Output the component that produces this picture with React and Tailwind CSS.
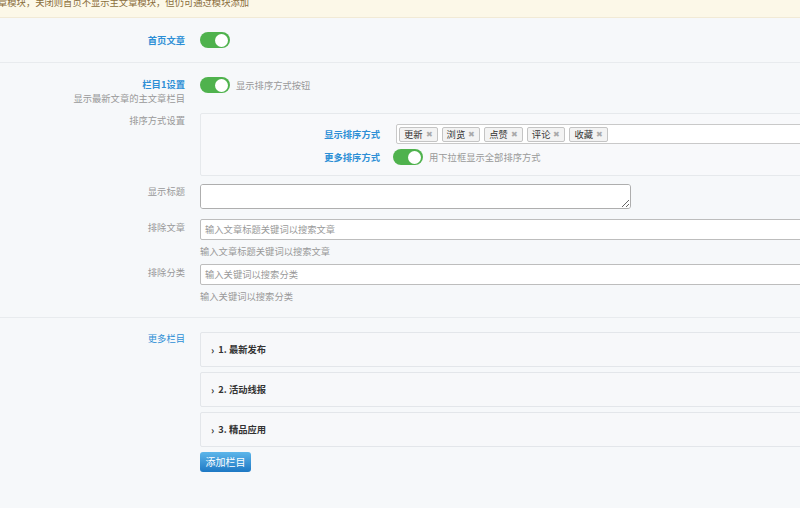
import React from "react";

const font = { fontFamily: '"Noto Sans CJK SC", "Noto Sans", sans-serif' };

function Toggle() {
  return (
    <div className="w-[30px] h-[16px] rounded-full bg-[#4fb24d] flex items-center justify-end pr-[2px] shrink-0">
      <div className="w-[13px] h-[13px] rounded-full bg-white" />
    </div>
  );
}

function Tag({ t }) {
  return (
    <span className="h-[15px] flex items-center gap-[3px] px-[4px] border border-[#c4c4c4] bg-[#f3f3f3] rounded-[2px] text-[9.3px] leading-[13px] text-[#333]">
      {t}
      <span className="text-[8px] text-[#aaa] leading-none">✖</span>
    </span>
  );
}

function Label({ children, blue, className = "" }) {
  return (
    <div
      className={`w-[185px] shrink-0 text-right text-[9.3px] leading-[14px] ${
        blue ? "text-[#2d8fd6] font-bold" : "text-[#999]"
      } ${className}`}
    >
      {children}
    </div>
  );
}

function AccItem({ n, t }) {
  return (
    <div className="h-[35px] border border-[#e3e6ea] bg-[#f7f8fa] rounded-[2px] flex items-center pl-[10px] text-[9.3px] font-bold text-[#333]">
      <span className="mr-[4px] text-[10px]">›</span>
      {n}. {t}
    </div>
  );
}

export default function App() {
  return (
    <div className="w-[800px] h-[508px] overflow-hidden bg-[#f6f8fa]" style={font}>
      <div className="w-[860px]">
        <div className="h-[18px] bg-[#fcf8e8] border-b border-[#f1ead6] overflow-hidden">
          <div className="text-[9.3px] leading-[14px] text-[#8a6d3b] -mt-[5px] -ml-[2px] whitespace-nowrap">
            章模块，关闭则首页不显示主文章模块，但仍可通过模块添加
          </div>
        </div>

        {/* section 1 */}
        <div className="flex items-center py-[14px] border-b border-[#e8ebee]">
          <Label blue>首页文章</Label>
          <div className="ml-[15px]">
            <Toggle />
          </div>
        </div>

        {/* section 2 */}
        <div className="pt-[14px] pb-[14px] border-b border-[#e8ebee]">
          <div className="flex">
            <div className="w-[185px] shrink-0 text-right">
              <div className="text-[9.3px] leading-[14px] text-[#2d8fd6] font-bold">栏目1设置</div>
              <div className="text-[9.3px] leading-[14px] text-[#999]">显示最新文章的主文章栏目</div>
            </div>
            <div className="ml-[15px] flex items-start gap-[6px]">
              <Toggle />
              <span className="text-[9.3px] leading-[16px] text-[#999]">显示排序方式按钮</span>
            </div>
          </div>

          <div className="flex mt-[8px]">
            <Label>排序方式设置</Label>
            <div className="ml-[15px] flex-1 border border-[#e6e9ec] bg-[#f8f9fb] rounded-[2px] pt-[10px] pb-[10px]">
              <div className="flex items-center">
                <div className="w-[179px] shrink-0 text-right text-[9.3px] leading-[14px] text-[#2d8fd6] font-bold">显示排序方式</div>
                <div className="ml-[16px] flex-1 h-[20px] border border-[#c9c9c9] bg-white rounded-[2px] flex items-center gap-[4px] pl-[2px]">
                  <Tag t="更新" />
                  <Tag t="浏览" />
                  <Tag t="点赞" />
                  <Tag t="评论" />
                  <Tag t="收藏" />
                </div>
              </div>
              <div className="flex items-center mt-[5px]">
                <div className="w-[179px] shrink-0 text-right text-[9.3px] leading-[14px] text-[#2d8fd6] font-bold">更多排序方式</div>
                <div className="ml-[13px] flex items-center gap-[6px]">
                  <Toggle />
                  <span className="text-[9.3px] leading-[14px] text-[#999]">用下拉框显示全部排序方式</span>
                </div>
              </div>
            </div>
          </div>

          <div className="flex mt-[8px]">
            <Label>显示标题</Label>
            <div className="ml-[15px]">
              <textarea className="block w-[431px] h-[25px] border border-[#aeaeae] bg-white rounded-[3px] resize-y" />
            </div>
          </div>

          <div className="flex mt-[10px]">
            <Label className="pt-[1px]">排除文章</Label>
            <div className="ml-[15px] flex-1">
              <div className="h-[21px] border border-[#bdbdbd] bg-white rounded-[2px] flex items-center pl-[4px] text-[9.3px] text-[#999]">
                输入文章标题关键词以搜索文章
              </div>
              <div className="text-[9.3px] leading-[14px] text-[#999] mt-[4px]">输入文章标题关键词以搜索文章</div>
            </div>
          </div>

          <div className="flex mt-[6px]">
            <Label className="pt-[1px]">排除分类</Label>
            <div className="ml-[15px] flex-1">
              <div className="h-[21px] border border-[#bdbdbd] bg-white rounded-[2px] flex items-center pl-[4px] text-[9.3px] text-[#999]">
                输入关键词以搜索分类
              </div>
              <div className="text-[9.3px] leading-[14px] text-[#999] mt-[4px]">输入关键词以搜索分类</div>
            </div>
          </div>
        </div>

        {/* section 3 */}
        <div className="flex pt-[13px]">
          <Label blue className="font-normal">更多栏目</Label>
          <div className="ml-[15px] mt-[1px] flex-1 flex flex-col gap-[5px]">
            <AccItem n="1" t="最新发布" />
            <AccItem n="2" t="活动线报" />
            <AccItem n="3" t="精品应用" />
            <div className="flex">
              <button className="w-[51px] h-[20px] rounded-[3px] bg-gradient-to-b from-[#5cb6ea] to-[#1c78c4] text-white text-[10px] leading-none flex items-center justify-center">
                添加栏目
              </button>
            </div>
          </div>
        </div>
      </div>
    </div>
  );
}
